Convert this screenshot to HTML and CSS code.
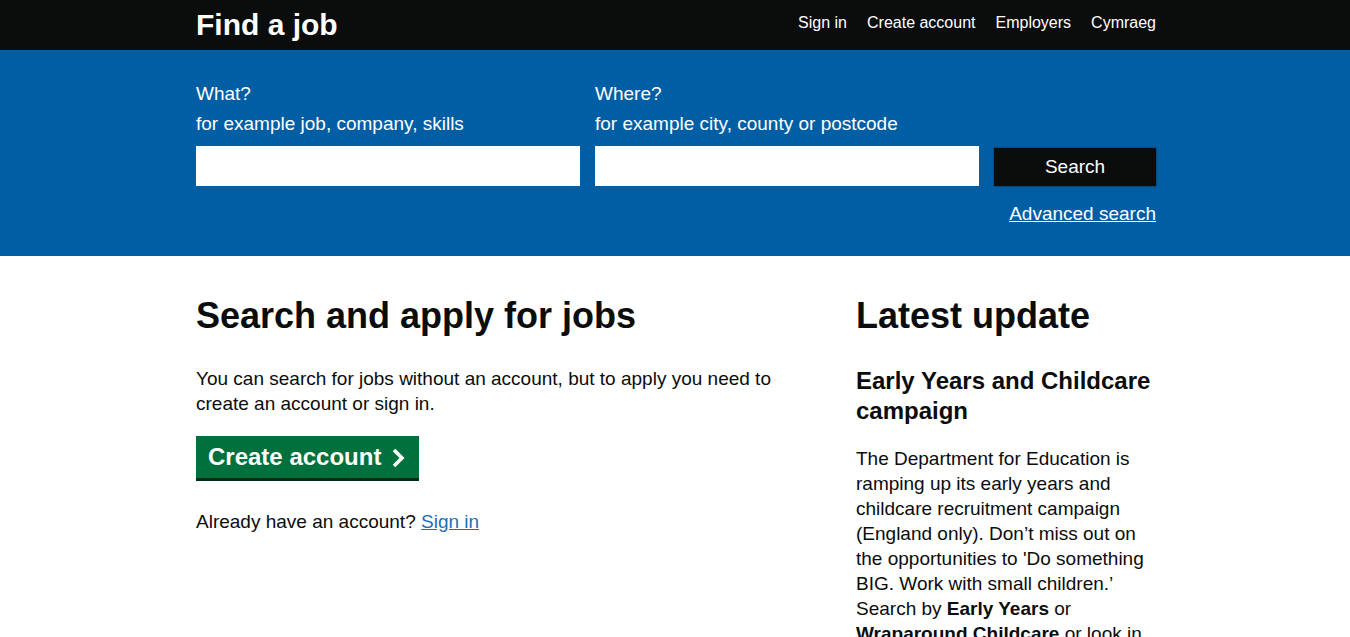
FILE: index.html
```html
<!DOCTYPE html>
<html lang="en">
<head>
<meta charset="utf-8">
<title>Find a job</title>
<link rel="stylesheet" href="styles.css">
</head>
<body>
<header class="site-header">
  <div class="container header-inner">
    <a class="brand" href="#">Find a job</a>
    <nav class="nav">
      <a href="#">Sign in</a>
      <a href="#">Create account</a>
      <a href="#">Employers</a>
      <a href="#">Cymraeg</a>
    </nav>
  </div>
</header>
<section class="search-band">
  <form class="container search-form">
    <div class="search-row">
      <div class="field">
        <label class="label">What?</label>
        <span class="hint">for example job, company, skills</span>
        <input class="input" type="text">
      </div>
      <div class="field">
        <label class="label">Where?</label>
        <span class="hint">for example city, county or postcode</span>
        <input class="input" type="text">
      </div>
      <div class="field field-button">
        <button class="search-btn" type="button">Search</button>
      </div>
    </div>
    <div class="advanced"><a href="#">Advanced search</a></div>
  </form>
</section>
<main class="container main-grid">
  <div class="col-main">
    <h1 class="heading-xl">Search and apply for jobs</h1>
    <p class="body">You can search for jobs without an account, but to apply you need to create an account or sign in.</p>
    <a class="green-btn" href="#">Create account
      <svg class="chev" width="16" height="22" viewBox="0 0 16 22"><path d="M3 3 L11 11 L3 19" fill="none" stroke="#fff" stroke-width="3.6"/></svg>
    </a>
    <p class="body">Already have an account? <a class="link" href="#">Sign in</a></p>
  </div>
  <aside class="col-side">
    <h2 class="heading-xl">Latest update</h2>
    <h3 class="heading-m">Early Years and Childcare campaign</h3>
    <p class="body">The Department for Education is ramping up its early years and childcare recruitment campaign (England only). Don’t miss out on the opportunities to 'Do something BIG. Work with small children.’ Search by <strong>Early Years</strong> or <strong>Wraparound Childcare</strong> or look in the Childcare category.</p>
  </aside>
</main>
</body>
</html>
```
FILE: styles.css
```css
* { box-sizing: border-box; }
html, body { margin: 0; padding: 0; }
body {
  font-family: "Liberation Sans", Arial, sans-serif;
  color: #0b0c0c;
  background: #fff;
  padding-left: 2px;
}
.container {
  width: 960px;
  margin: 0 auto;
}
.site-header {
  background: #0b0c0c;
  height: 50px;
  margin-left: -2px;
}
.header-inner {
  display: flex;
  justify-content: space-between;
  align-items: center;
  height: 50px;
  padding-left: 2px;
  width: 962px;
}
.brand {
  color: #fff;
  text-decoration: none;
  font-weight: bold;
  font-size: 30px;
  line-height: 1;
  margin-top: 0;
}
.nav {
  display: flex;
  gap: 20px;
  margin-top: -4px;
}
.nav a {
  color: #fff;
  text-decoration: none;
  font-size: 16px;
}
.search-band {
  background: #005ea5;
  height: 206px;
  margin-left: -2px;
  padding-left: 2px;
}
.search-form {
  padding-top: 31px;
}
.search-row {
  display: flex;
  gap: 15px;
  align-items: flex-end;
}
.field {
  display: flex;
  flex-direction: column;
  width: 384px;
}
.label, .hint {
  color: #fff;
  font-size: 19px;
  line-height: 25px;
}
.hint { margin-bottom: 10px; margin-top: 5px; }
.input {
  height: 40px;
  border: 0;
  background: #fff;
  width: 100%;
  font-size: 19px;
  padding: 0 8px;
}
.field-button {
  width: 162px;
}
.search-btn {
  height: 38px;
  width: 100%;
  background: #0b0c0c;
  color: #fff;
  border: 0;
  font-family: "Liberation Sans", Arial, sans-serif;
  font-size: 19px;
  box-shadow: 0 0 2px rgba(0,0,0,0.6);
}
.advanced {
  text-align: right;
  margin-top: 15px;
  font-size: 19px;
  line-height: 25px;
}
.advanced a { color: #fff; }
.main-grid {
  display: grid;
  grid-template-columns: 640px 300px;
  gap: 20px;
  padding-top: 40px;
}
.heading-xl {
  font-size: 36px;
  line-height: 40px;
  margin: 0 0 30px;
  font-weight: bold;
}
.heading-m {
  font-size: 24px;
  line-height: 30px;
  margin: 0 0 20px;
  font-weight: bold;
}
.body {
  font-size: 19px;
  line-height: 25px;
  margin: 0 0 20px;
}
.col-main .body { width: 590px; }
.link { color: #1d70b8; }
.green-btn {
  display: inline-flex;
  align-items: center;
  gap: 10px;
  background: #00703c;
  color: #fff;
  text-decoration: none;
  font-weight: bold;
  font-size: 24px;
  line-height: 30px;
  padding: 6px 12px 6px 12px;
  height: 42px;
  box-shadow: 0 3px 0 #002d18;
  margin: 0 0 31px;
}
.chev { margin-top: 1px; }
```
